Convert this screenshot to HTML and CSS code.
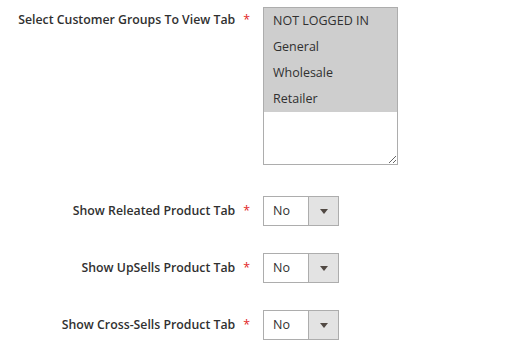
FILE: index.html
```html
<!DOCTYPE html>
<html>
<head>
    <meta name="viewport" content="width=device-width, initial-scale=1">
    <link rel="stylesheet" href="styles.css">
</head>
<body>

<div class="form">
    <div class="field field-multi">
        <label class="label">Select Customer Groups To View Tab<span class="required">*</span></label>
        <div class="multiselect">
            <div class="option selected">NOT LOGGED IN</div>
            <div class="option selected">General</div>
            <div class="option selected">Wholesale</div>
            <div class="option selected">Retailer</div>
        </div>
    </div>

    <div class="field">
        <label class="label">Show Releated Product Tab<span class="required">*</span></label>
        <div class="select">
            <span class="value">No</span>
            <span class="button"><span class="arrow"></span></span>
        </div>
    </div>

    <div class="field">
        <label class="label">Show UpSells Product Tab<span class="required">*</span></label>
        <div class="select">
            <span class="value">No</span>
            <span class="button"><span class="arrow"></span></span>
        </div>
    </div>

    <div class="field">
        <label class="label">Show Cross-Sells Product Tab<span class="required">*</span></label>
        <div class="select">
            <span class="value">No</span>
            <span class="button"><span class="arrow"></span></span>
        </div>
    </div>
</div>

</body>
</html>
```

FILE: styles.css
```css
body {
    margin: 0;
    background: #fff;
    font-family: "Open Sans", sans-serif;
    font-size: 12.5px;
    color: #303030;
}

.form {
    display: flex;
    flex-direction: column;
    gap: 27px;
    padding-top: 7px;
}

.field {
    display: flex;
    align-items: center;
}

.field-multi {
    align-items: flex-start;
    margin-bottom: 4px;
}

.label {
    width: 250px;
    margin-right: 13px;
    text-align: right;
    font-size: 12.3px;
    font-weight: 600;
    line-height: 20px;
}

.field-multi .label {
    padding-top: 3px;
}

.required {
    color: #e22626;
    margin-left: 8px;
    font-weight: 400;
}

.multiselect {
    box-sizing: border-box;
    width: 135px;
    height: 158px;
    border: 1px solid #adadad;
    overflow: auto;
    resize: vertical;
}

.option {
    height: 26px;
    line-height: 26px;
    padding: 0 9px;
}

.option.selected {
    background: #cecece;
}

.select {
    box-sizing: border-box;
    display: flex;
    width: 76px;
    height: 30px;
    border: 1px solid #adadad;
}

.value {
    flex: 1;
    padding-left: 9px;
    line-height: 28px;
}

.button {
    width: 29px;
    border-left: 1px solid #adadad;
    background: #e3e3e3;
    display: flex;
    align-items: center;
    justify-content: center;
}

.arrow {
    width: 0;
    height: 0;
    border-left: 4px solid transparent;
    border-right: 4px solid transparent;
    border-top: 5px solid #514943;
}
```
